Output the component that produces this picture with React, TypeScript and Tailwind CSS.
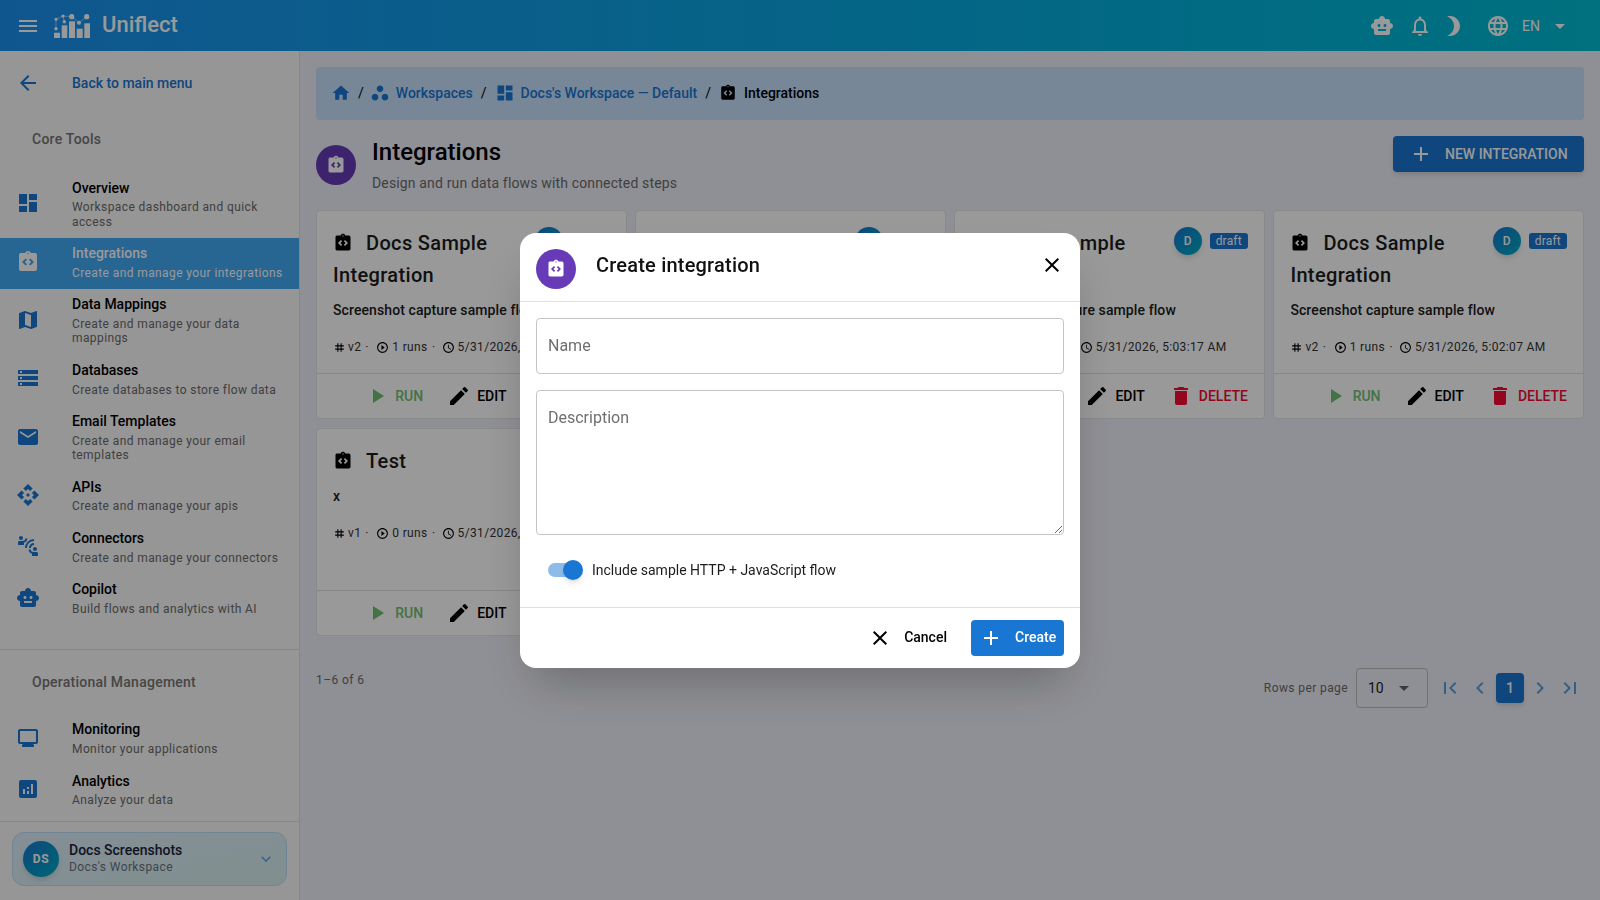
import {
  MdAccessTime, MdAdd, MdAnalytics, MdApi, MdArrowBack, MdArrowDropDown, MdBrightness3, MdChevronLeft, MdChevronRight,
  MdClose, MdConnectWithoutContact, MdDashboard, MdDelete, MdEdit, MdEmail, MdFirstPage, MdHome, MdIntegrationInstructions,
  MdKeyboardArrowDown, MdLanguage, MdLastPage, MdMap, MdMenu, MdMonitor, MdOutlineNotifications, MdPlayArrow,
  MdPlayCircleOutline, MdSmartToy, MdStorage, MdTag, MdWorkspaces,
} from "react-icons/md";

const coreTools = [
  { icon: MdDashboard, title: "Overview", sub: "Workspace dashboard and quick access" },
  { icon: MdIntegrationInstructions, title: "Integrations", sub: "Create and manage your integrations", active: true },
  { icon: MdMap, title: "Data Mappings", sub: "Create and manage your data mappings" },
  { icon: MdStorage, title: "Databases", sub: "Create databases to store flow data" },
  { icon: MdEmail, title: "Email Templates", sub: "Create and manage your email templates" },
  { icon: MdApi, title: "APIs", sub: "Create and manage your apis" },
  { icon: MdConnectWithoutContact, title: "Connectors", sub: "Create and manage your connectors" },
  { icon: MdSmartToy, title: "Copilot", sub: "Build flows and analytics with AI" },
];

const opsTools = [
  { icon: MdMonitor, title: "Monitoring", sub: "Monitor your applications" },
  { icon: MdAnalytics, title: "Analytics", sub: "Analyze your data" },
];

const integrations = [
  { name: "Docs Sample Integration", desc: "Screenshot capture sample flow", version: "v2", runs: 1, date: "5/31/2026, 5:04:21 AM", draft: true },
  { name: "Docs Sample Integration", desc: "Screenshot capture sample flow", version: "v2", runs: 1, date: "5/31/2026, 5:03:49 AM", draft: true },
  { name: "Docs Sample Integration", desc: "Screenshot capture sample flow", version: "v2", runs: 1, date: "5/31/2026, 5:03:17 AM", draft: true },
  { name: "Docs Sample Integration", desc: "Screenshot capture sample flow", version: "v2", runs: 1, date: "5/31/2026, 5:02:07 AM", draft: true },
  { name: "Test", desc: "x", version: "v1", runs: 0, date: "5/31/2026, 4:58:12 AM", draft: false },
  { name: "Test", desc: "x", version: "v1", runs: 0, date: "5/31/2026, 4:55:40 AM", draft: false },
];

function Logo() {
  return (
    <svg width="36" height="24" viewBox="0 0 36 24" className="shrink-0" fill="currentColor">
      <g stroke="currentColor" strokeWidth="0.5" fill="none">
        <path d="M2 5.3 L9 2 L17.7 2.7 L25 8.7 L32.7 2.7" />
        <path d="M2 5.3 L2 14.7 M9 2 L10.3 7.7" />
      </g>
      <circle cx="2" cy="5.3" r="1.5" />
      <circle cx="9" cy="2" r="1.6" />
      <circle cx="17.7" cy="2.7" r="2.6" />
      <circle cx="25" cy="8.7" r="2" />
      <circle cx="32.7" cy="2.7" r="2.6" />
      <circle cx="2" cy="14.7" r="1.7" />
      <circle cx="10.3" cy="7.7" r="1.7" />
      <rect x="0" y="18.7" width="6" height="5.3" />
      <rect x="7.7" y="11.3" width="5.6" height="12.7" />
      <rect x="15" y="7.3" width="6" height="16.7" />
      <rect x="22.7" y="14.7" width="6" height="9.3" />
      <rect x="30.3" y="9.3" width="5.7" height="14.7" />
    </svg>
  );
}

function NavRow({ item }: { item: (typeof coreTools)[number] }) {
  const Icon = item.icon;
  return (
    <div className={`flex items-center pl-4 pr-4 pt-[5.6px] pb-[8.6px] ${item.active ? "bg-[#42a8f5]" : ""}`}>
      <div className="w-14 shrink-0">
        <Icon size={24} className={item.active ? "text-white" : "text-[#1976d2]"} />
      </div>
      <div className="min-w-0">
        <div className={`text-sm leading-[21px] font-medium ${item.active ? "text-white" : "text-black"}`}>{item.title}</div>
        <div className={`mt-[1.6px] text-xs leading-[14.4px] tracking-[0.4px] ${item.active ? "text-white" : "text-[#6b6b6b]"}`}>
          {item.sub}
        </div>
      </div>
    </div>
  );
}

function Sidebar() {
  return (
    <aside className="w-[300px] shrink-0 h-full border-r border-[#e0e0e0] bg-[#fafafa] flex flex-col overflow-hidden">
      <div className="flex items-center pl-4 h-12 mt-2">
        <div className="w-14 shrink-0">
          <MdArrowBack size={24} className="text-[#1976d2]" />
        </div>
        <span className="text-sm font-medium text-[#1976d2]">Back to main menu</span>
      </div>
      <div className="pl-8 mt-[22px] text-sm leading-5 font-medium tracking-[0.25px] text-[#757575]">Core Tools</div>
      <div className="mt-[23px]">
        {coreTools.map((item) => (
          <NavRow key={item.title} item={item} />
        ))}
      </div>
      <div className="mt-[24px] border-t border-[#e0e0e0]" />
      <div className="pl-8 mt-[22px] text-sm leading-5 font-medium tracking-[0.25px] text-[#757575]">Operational Management</div>
      <div className="mt-[22px]">
        {opsTools.map((item) => (
          <NavRow key={item.title} item={item} />
        ))}
      </div>
      <div className="mt-[5px] border-t border-[#e0e0e0]" />
      <div className="mx-3 mt-[10px] h-[54px] rounded-xl border border-[#bcdcf5] bg-gradient-to-br from-[#dcedfb] to-[#d8efee] flex items-center pl-[10px] pr-[10px]">
        <div className="w-9 h-9 rounded-full bg-gradient-to-br from-[#1976d2] to-[#00acc1] shadow-md text-white text-xs font-bold tracking-[0.6px] flex items-center justify-center">
          DS
        </div>
        <div className="ml-[10px] mb-[2px] flex-1">
          <div className="text-sm leading-[18px] font-medium text-[#1a2436]">Docs Screenshots</div>
          <div className="text-xs leading-[17px] tracking-[0.4px] text-[#6b7280]">Docs's Workspace</div>
        </div>
        <MdKeyboardArrowDown size={20} className="text-[#64a8e8]" />
      </div>
    </aside>
  );
}

function Breadcrumb() {
  const link = "text-sm font-medium text-[#1976d2]";
  const slash = <span className="mx-[8px] text-sm text-black">/</span>;
  return (
    <div className="h-[53px] rounded bg-[#c6e2fe] flex items-center pl-[15px] pb-[2px]">
      <MdHome size={20} className="text-[#1976d2]" />
      <span className="ml-[7px] mr-[6px] text-sm text-black">/</span>
      <MdWorkspaces size={20} className="text-[#1976d2] mr-[6px]" />
      <span className={link}>Workspaces</span>
      {slash}
      <MdDashboard size={20} className="text-[#1976d2] mr-[3px]" />
      <span className={`${link} ml-[3px]`}>Docs's Workspace — Default</span>
      {slash}
      <MdIntegrationInstructions size={18} className="text-black mr-[7px]" />
      <span className="text-sm font-medium text-black">Integrations</span>
    </div>
  );
}

function IntegrationCard({ card }: { card: (typeof integrations)[number] }) {
  return (
    <div className="flex flex-col min-h-[208px] rounded bg-white border border-[#e4e4e6]">
      <div className="px-4 pt-4">
        {card.draft && (
          <div className="float-right flex items-center gap-2 ml-2">
            <div className="w-7 h-7 rounded-full bg-gradient-to-br from-[#1976d2] to-[#00acc1] shadow-md text-white text-xs font-medium flex items-center justify-center">
              D
            </div>
            <span className="h-4 px-[6px] rounded-[3px] bg-[#1976d2] text-white text-xs leading-4 tracking-[0.2px]">draft</span>
          </div>
        )}
        <div className="text-xl leading-8 font-medium tracking-[0.35px] text-[#1c1c1c]">
          <MdIntegrationInstructions size={20} className="inline-block align-[-3px] mr-[13px] text-black" />
          {card.name}
        </div>
        <div className="mt-[9px] text-sm leading-5 font-medium tracking-[0.1px] text-[#1c1c1c]">{card.desc}</div>
        <div className="mt-[17px] flex items-center text-xs leading-5 tracking-[0.35px] text-[#333] whitespace-nowrap">
          <MdTag size={13} className="text-black" />
          <span className="ml-[2px]">{card.version}</span>
          <span className="ml-[4px]">·</span>
          <MdPlayCircleOutline size={13} className="ml-[7.5px] text-black" />
          <span className="ml-[3px]">{card.runs} runs</span>
          <span className="ml-[4.5px]">·</span>
          <MdAccessTime size={13} className="ml-[6px] text-black" />
          <span className="ml-[3px]">{card.date}</span>
        </div>
      </div>
      <div className="mt-auto pt-4">
        <div className="h-[45px] border-t border-[#e0e0e0] flex items-center justify-end pr-4 text-sm font-medium">
          <MdPlayArrow size={24} className="text-[#70c074]" />
          <span className="ml-[6px] text-[#70c074]">RUN</span>
          <MdEdit size={24} className="ml-[24px] text-black" />
          <span className="ml-[6px] text-black">EDIT</span>
          <MdDelete size={24} className="ml-[24px] text-[#f50a32]" />
          <span className="ml-[6px] text-[#f50a32]">DELETE</span>
        </div>
      </div>
    </div>
  );
}

function Pagination() {
  return (
    <div className="mt-[16px] flex items-start justify-between">
      <span className="mt-[18px] text-xs leading-5 tracking-[0.4px] text-[#6b6b6b]">1–6 of 6</span>
      <div className="mt-[16px] mr-[2px] flex items-center">
        <span className="text-xs tracking-[0.4px] text-[#6b6b6b]">Rows per page</span>
        <div className="ml-2 w-[72px] h-10 rounded border border-[#bdbdbd] flex items-center pl-[11px] pr-[11px] text-sm text-[#1c1c1c] justify-between">
          10
          <MdArrowDropDown size={24} className="text-[#616161]" />
        </div>
        <MdFirstPage size={24} className="ml-[10px] text-[#5b9fe0]" />
        <MdChevronLeft size={24} className="ml-[6px] text-[#5b9fe0]" />
        <div className="ml-[4px] w-7 h-[30px] rounded bg-[#1976d2] shadow-md text-white text-sm font-medium flex items-center justify-center">1</div>
        <MdChevronRight size={24} className="ml-[4px] text-[#5b9fe0]" />
        <MdLastPage size={24} className="ml-[6px] text-[#5b9fe0]" />
      </div>
    </div>
  );
}

function CreateDialog() {
  return (
    <div className="fixed inset-0 bg-black/40 flex items-center justify-center">
      <div className="w-[560px] h-[435px] rounded-[16px] bg-white shadow-2xl flex flex-col overflow-hidden">
        <div className="h-[69px] shrink-0 border-b border-[#e0e0e0] flex items-center pl-4 pr-4">
          <div className="w-10 h-10 rounded-full bg-[#673ab7] flex items-center justify-center mt-[5px]">
            <MdIntegrationInstructions size={20} className="text-white" />
          </div>
          <h2 className="ml-5 flex-1 text-xl font-medium tracking-[0.2px] text-[#111] mt-[-3px]">Create integration</h2>
          <MdClose size={24} className="text-black mt-[-3px]" />
        </div>
        <div className="flex-1 px-4 pt-4 flex flex-col">
          <input
            placeholder="Name"
            className="h-14 shrink-0 w-full rounded border border-[#c4c4c4] px-[11px] text-base text-black placeholder:text-[#6f6f6f] outline-none"
          />
          <textarea
            placeholder="Description"
            className="mt-4 h-[145px] shrink-0 w-full rounded border border-[#c4c4c4] px-[11px] pt-[15px] text-base text-black placeholder:text-[#6f6f6f] outline-none"
          />
          <div className="mt-[25px] flex items-center pl-3">
            <div className="relative w-[34px] h-[14px] rounded-full bg-[#8fbbe9]">
              <div className="absolute right-[-1px] top-[-3px] w-5 h-5 rounded-full bg-[#1976d2] shadow-md" />
            </div>
            <span className="ml-[10px] text-sm text-[#1c1c1c]">Include sample HTTP + JavaScript flow</span>
          </div>
        </div>
        <div className="h-[61px] shrink-0 border-t border-[#e0e0e0] flex items-center justify-end pr-4">
          <MdClose size={24} className="text-black" />
          <span className="ml-3 mr-6 mt-[-2px] text-sm font-medium text-black">Cancel</span>
          <div className="w-[93px] h-9 rounded bg-[#1976d2] flex items-center pl-2 text-white">
            <MdAdd size={24} />
            <span className="ml-[12px] mt-[-2px] text-sm font-medium">Create</span>
          </div>
        </div>
      </div>
    </div>
  );
}

export default function App() {
  return (
    <div className="relative w-full h-screen overflow-hidden flex flex-col [font-family:Roboto,sans-serif] bg-[#eff0f8]">
      <header className="h-[51px] shrink-0 bg-gradient-to-r from-[#1a90ee] to-[#00bcd4] flex items-center text-white">
        <MdMenu size={24} className="ml-4" />
        <div className="ml-[14px]">
          <Logo />
        </div>
        <span className="ml-3 mt-[-2px] text-[22px] font-medium">Uniflect</span>
        <div className="ml-auto flex items-center">
          <MdSmartToy size={24} />
          <MdOutlineNotifications size={24} className="ml-[14px]" />
          <MdBrightness3 size={24} className="ml-[9px]" />
          <MdLanguage size={24} className="ml-[21px]" />
          <span className="ml-[12px] text-sm">EN</span>
          <MdArrowDropDown size={24} className="ml-[8px] mr-[28px]" />
        </div>
      </header>
      <div className="flex-1 flex min-h-0">
        <Sidebar />
        <main className="flex-1 min-w-0 px-4 pt-4">
          <Breadcrumb />
          <div className="mt-[16px] h-[74px] flex items-start">
            <div className="mt-[9px] w-10 h-10 rounded-full bg-[#673ab7] flex items-center justify-center">
              <MdIntegrationInstructions size={20} className="text-white" />
            </div>
            <div className="ml-4 flex-1">
              <h1 className="text-2xl leading-8 font-medium text-black">Integrations</h1>
              <p className="mt-[5px] text-sm leading-5 tracking-[0.15px] text-[#6b6b6b]">Design and run data flows with connected steps</p>
            </div>
            <div className="h-9 w-[191px] rounded bg-[#1976d2] shadow-md flex items-center pl-4 text-white text-sm font-medium">
              <MdAdd size={24} />
              <span className="ml-[12px]">NEW INTEGRATION</span>
            </div>
          </div>
          <div className="grid grid-cols-4 gap-x-[8.5px] gap-y-[9px]">
            {integrations.map((card, i) => (
              <IntegrationCard key={i} card={card} />
            ))}
          </div>
          <Pagination />
        </main>
      </div>
      <CreateDialog />
    </div>
  );
}
